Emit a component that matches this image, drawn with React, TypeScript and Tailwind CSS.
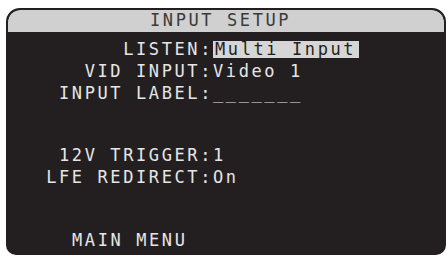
import React from 'react';

const rows = [
  { label: 'LISTEN:', value: 'Multi Input', selected: true },
  { label: 'VID INPUT:', value: 'Video 1' },
  { label: 'INPUT LABEL:', value: '_______' },
];

const lowerRows = [
  { label: '12V TRIGGER:', value: '1' },
  { label: 'LFE REDIRECT:', value: 'On' },
];

const Row = ({ label, value, selected }: { label: string; value: string; selected?: boolean }) => (
  <div className="flex h-[22px] items-center leading-[22px]">
    <span className="w-[205px] shrink-0 text-right whitespace-pre">{label}</span>
    {selected ? (
      <span className="h-[17px] bg-[#d6d6d6] pl-[2px] pr-[3px] leading-[17px] text-[#231f20] whitespace-pre">{value}</span>
    ) : (
      <span className="whitespace-pre">{value}</span>
    )}
  </div>
);

export default function App() {
  return (
    <div className="h-[257px] w-[448px] overflow-hidden bg-white pt-[8px] pl-[6px]">
      <div
        className="flex h-[247px] w-[440px] flex-col overflow-hidden rounded-t-[14px] rounded-b-[10px] border-2 border-[#231f20] bg-[#231f20] text-[17px] tracking-[2.6px]"
        style={{ fontFamily: '"DejaVu Sans Mono", "Liberation Mono", monospace' }}
      >
        {/* header bar */}
        <div className="flex h-[22px] shrink-0 items-center rounded-t-[12px] bg-[#d0d0d0] pl-[142px] text-[#3a3a3a]">
          INPUT SETUP
        </div>

        <div className="flex flex-col pt-[6px] text-[#e6e6e6]">
          {rows.map((r) => (
            <Row key={r.label} {...r} />
          ))}
          <div className="mt-[40px] flex flex-col">
            {lowerRows.map((r) => (
              <Row key={r.label} {...r} />
            ))}
          </div>
          <div className="mt-[41px] h-[22px] pl-[64px] leading-[22px]">MAIN MENU</div>
        </div>
      </div>
    </div>
  );
}
